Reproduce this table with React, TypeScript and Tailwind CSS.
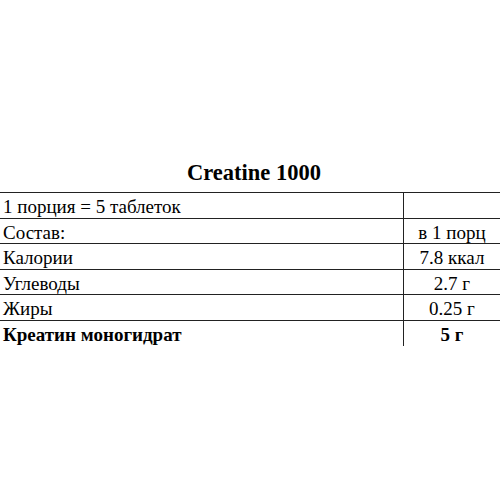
const ROWS = [
  { name: '1 порция = 5 таблеток', value: '' },
  { name: 'Состав:', value: 'в 1 порц' },
  { name: 'Калории', value: '7.8 ккал' },
  { name: 'Углеводы', value: '2.7 г' },
  { name: 'Жиры', value: '0.25 г' },
  { name: 'Креатин моногидрат', value: '5 г', bold: true },
]

export default function App() {
  return (
    <div className="w-[500px] h-[500px] bg-white overflow-hidden text-black font-[family-name:Liberation_Serif,serif]">
      <div className="pt-[160px]">
        <h1 className="text-center pl-[8px] text-[22.5px] leading-[26px] font-bold">Creatine 1000</h1>
        <div className="mt-[6px] w-[520px] border-t border-[#222]">
          {ROWS.map((r, i) => (
            <div
              key={i}
              className={`flex h-[25.5px] ${i < ROWS.length - 1 ? 'border-b border-[#222]' : ''} ${r.bold ? 'font-bold' : ''}`}
            >
              <div className="w-[403px] pl-[3px] text-[19px] leading-[24px] pt-[2px] whitespace-nowrap">{r.name}</div>
              <div className="w-[97px] border-l border-[#222] text-center text-[19px] leading-[24px] pt-[2px] whitespace-nowrap">{r.value}</div>
            </div>
          ))}
        </div>
      </div>
    </div>
  )
}
